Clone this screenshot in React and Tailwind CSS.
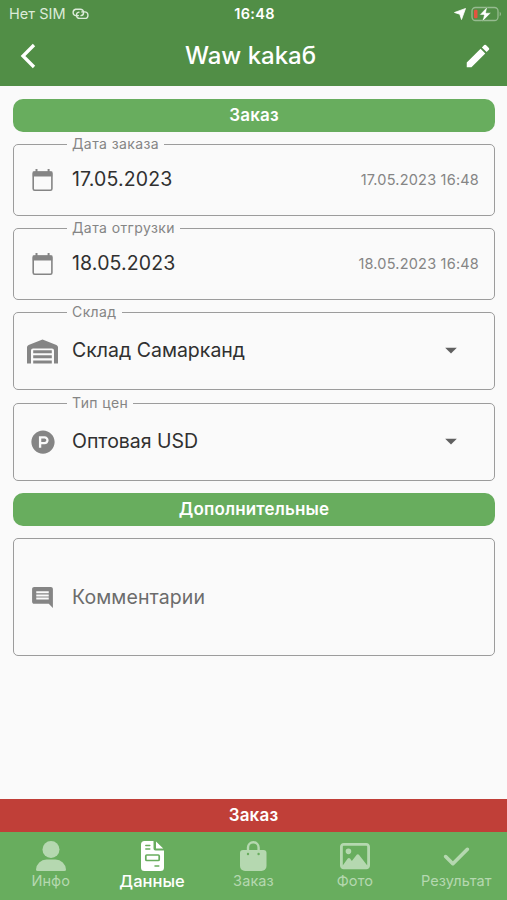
import { FaCheck, FaProductHunt, FaRegImage } from 'react-icons/fa6';
import { MdArrowDropDown, MdComment, MdEdit } from 'react-icons/md';

const LinkIcon = () => (
  <svg width="18" height="12" viewBox="0 0 18 12" fill="none" stroke="currentColor" strokeWidth="1.4">
    <path d="M7.4 7.6H4.6a3.3 3.3 0 0 1 0-6.4h4.6c4.2 0 4.4 6 .8 6.4" strokeLinecap="round" />
    <path d="M10.8 3.9h2.9a3.2 3.2 0 0 1 0 6.5H8.8c-4.2 0-4.4-5.8-.8-6.3" strokeLinecap="round" />
  </svg>
);

const BatteryIcon = () => (
  <svg width="31" height="16" viewBox="0 0 31 16">
    <rect x="1" y="1.5" width="26" height="13" rx="3.5" fill="none" stroke="#fff" strokeOpacity="0.4" strokeWidth="1.3" />
    <path d="M28.7 5.8a2.5 2.5 0 0 1 0 4.4z" fill="#fff" fillOpacity="0.4" />
    <rect x="3" y="3.7" width="3.5" height="8.6" rx="1" fill="#e2543f" />
    <path d="M16.5 0.5 8.5 9h4.5l-2 7L20 6.8h-5z" fill="#fff" stroke="#518e46" strokeWidth="0.5" />
  </svg>
);

const CalendarIcon = () => (
  <svg width="22" height="24" viewBox="0 0 22 24" fill="none">
    <rect x="1.2" y="4" width="18.7" height="18.2" rx="1.5" stroke="currentColor" strokeWidth="1.6" />
    <path d="M0.8 3.5h19.5v5H0.8zM3.5 1h2v2.5h-2zM15.6 1h2v2.5h-2z" fill="currentColor" />
  </svg>
);

const WarehouseIcon = () => (
  <svg width="31" height="25" viewBox="0 0 31 25" fill="currentColor">
    <path d="M15.5.5 29.400 5.900A2.500 2.500 0 0 1 31 8.200V24.500h-4V11.500a2 2 0 0 0-2-2H6a2 2 0 0 0-2 2v13H0V8.200a2.500 2.500 0 0 1 1.600-2.300z" />
    <path d="M6.200 11.200h18.600v3H6.200zM6.200 16.300h18.600v3H6.200zM6.200 21.500h18.600v3H6.200z" />
  </svg>
);

const UserIcon = () => (
  <svg width="30" height="30" viewBox="0 0 30 30" fill="currentColor">
    <circle cx="15" cy="8.5" r="8.5" />
    <path d="M10.5 18.5h9A10.5 10.5 0 0 1 30 28.5a1.5 1.5 0 0 1-1.5 1.5h-27A1.5 1.5 0 0 1 0 28.5a10.5 10.5 0 0 1 10.5-10z" />
  </svg>
);

const DocumentIcon = () => (
  <svg width="23" height="30" viewBox="0 0 23 30">
    <path
      d="M3.5 0H12.5v7.5c0 1.1.9 2 2 2H23v17a3.5 3.5 0 0 1-3.5 3.5h-16A3.5 3.5 0 0 1 0 26.5v-23A3.5 3.5 0 0 1 3.5 0zM15 .5 22.3 7.6H15z"
      fill="#fff"
    />
    <path d="M4.8 4.5h4M4.8 8h4M14 25h3.8" stroke="#68ad5e" strokeWidth="1.5" strokeLinecap="round" />
    <rect x="4.8" y="14" width="13.4" height="5.5" rx="1" fill="none" stroke="#68ad5e" strokeWidth="1.7" />
  </svg>
);

const BagIcon = () => (
  <svg width="28" height="30" viewBox="0 0 28 30">
    <path d="M9 12V6.5a5.3 5.3 0 0 1 10.6 0V12" fill="none" stroke="currentColor" strokeWidth="2.4" />
    <path d="M4 9h20.5a3 3 0 0 1 3 3v13a5 5 0 0 1-5 5H6a5 5 0 0 1-5-5V12a3 3 0 0 1 3-3z" fill="currentColor" />
    <circle cx="9" cy="13" r="1.2" fill="#68ad5e" />
    <circle cx="19.6" cy="13" r="1.2" fill="#68ad5e" />
  </svg>
);

const dates = [
  { label: 'Дата заказа', date: '17.05.2023', full: '17.05.2023 16:48' },
  { label: 'Дата отгрузки', date: '18.05.2023', full: '18.05.2023 16:48' }
];

const selects = [
  { label: 'Склад', value: 'Склад Самарканд', icon: <WarehouseIcon /> },
  { label: 'Тип цен', value: 'Оптовая USD', icon: <FaProductHunt className="size-[24px]" /> }
];

const tabs = [
  { label: 'Инфо', icon: <UserIcon /> },
  { label: 'Данные', icon: <DocumentIcon />, active: true },
  { label: 'Заказ', icon: <BagIcon /> },
  { label: 'Фото', icon: <FaRegImage className="size-[30px]" /> },
  { label: 'Результат', icon: <FaCheck className="size-[29px]" /> }
];

const SectionTitle = ({ children }) => (
  <h2 className="h-[33px] shrink-0 rounded-[10px] bg-[#68ad5e] text-white text-[17px] leading-[33px] font-semibold text-center tracking-[0.15px]">
    {children}
  </h2>
);

const Field = ({ label, children }) => (
  <fieldset className="min-w-0 shrink-0 rounded-[5px] border border-[#9c9c9c]">
    {label && (
      <legend className="ml-[53px] px-[5px] text-[14px] leading-[1px] tracking-[0.4px] text-[#858585] whitespace-nowrap">
        <span className="relative -top-px">{label}</span>
      </legend>
    )}
    {children}
  </fieldset>
);

const App = () => {
  return (
    <div className="w-[507px] h-[900px] flex flex-col bg-[#fafafa] overflow-hidden font-['Inter','Liberation_Sans',sans-serif]">
      <header className="h-[86px] shrink-0 bg-[#518e46] text-white">
        <div className="h-[27px] grid grid-cols-[1fr_auto_1fr] items-center pl-[9px] pr-[5px]">
          <div className="flex items-center gap-[5px] text-[14.5px] tracking-[0.05px] text-[#dcebd9]">
            <span>Нет SIM</span>
            <LinkIcon />
          </div>
          <span className="text-[14.5px] font-semibold tracking-[0.3px] -ml-[2px]">16:48</span>
          <div className="flex items-center justify-end gap-[5px]">
            <svg width="12" height="12" viewBox="0 0 12 12" fill="#fff">
              <path d="M11.5 0.5 7.5 11.5 5.8 6.2 0.5 4.5z" stroke="#fff" strokeWidth="0.8" strokeLinejoin="round" />
            </svg>
            <BatteryIcon />
          </div>
        </div>
        <div className="h-[58px] flex items-center justify-between pl-[20px] pr-[14px]">
          <svg width="16" height="26" viewBox="0 0 16 26" fill="none" stroke="#fff" strokeWidth="3.3">
            <path d="M14 2 3 13l11 11" />
          </svg>
          <h1 className="ml-[2px] text-[24px] leading-[30px] font-medium">Waw kakaб</h1>
          <MdEdit className="size-[30px]" />
        </div>
      </header>

      <main className="flex-1 flex flex-col gap-[12.3px] pl-[13px] pr-[12px] pt-[12.6px]">
        <SectionTitle>Заказ</SectionTitle>
        {dates.map((item) => (
          <Field key={item.label} label={item.label}>
            <div className="h-[70px] flex items-center pl-[18px] pr-[15px] text-[#858585]">
              <CalendarIcon />
              <span className="flex-1 ml-[18px] -mt-[1px] text-[19.5px] tracking-[0.15px] text-[#303030]">{item.date}</span>
              <span className="text-[14.5px] tracking-[0.2px]">{item.full}</span>
            </div>
          </Field>
        ))}
        {selects.map((item) => (
          <Field key={item.label} label={item.label}>
            <div className="h-[76px] flex items-center pr-[29px] text-[#858585]">
              <span className="w-[57px] mr-px flex justify-center">{item.icon}</span>
              <span className="flex-1 -mt-[1px] text-[19.5px] text-[#303030]">{item.value}</span>
              <MdArrowDropDown className="size-[28px] -mt-[2px] text-[#606060]" />
            </div>
          </Field>
        ))}
        <SectionTitle>Дополнительные</SectionTitle>
        <Field>
          <div className="h-[116px] flex items-center text-[#858585]">
            <span className="w-[57px] mr-px flex justify-center">
              <MdComment className="size-[25px]" />
            </span>
            <span className="text-[19.5px] tracking-[0.1px] text-[#6c6c6c]">Комментарии</span>
          </div>
        </Field>
      </main>

      <div className="h-[33px] shrink-0 bg-[#c03f38] text-white text-[17px] leading-[33px] font-semibold text-center tracking-[0.2px]">
        Заказ
      </div>
      <nav className="h-[68px] shrink-0 grid grid-cols-5 bg-[#68ad5e] pt-[9px]">
        {tabs.map((tab) => (
          <button
            key={tab.label}
            className={
              tab.active
                ? 'flex flex-col items-center text-white text-[16.5px] font-medium tracking-[0.05px]'
                : 'flex flex-col items-center text-[#b5d8b0] text-[14.5px] tracking-[0.1px]'
            }
          >
            <span className="h-[30px] flex items-center">{tab.icon}</span>
            <span className="h-[20px] leading-[20px]">{tab.label}</span>
          </button>
        ))}
      </nav>
    </div>
  );
};

export default App;
